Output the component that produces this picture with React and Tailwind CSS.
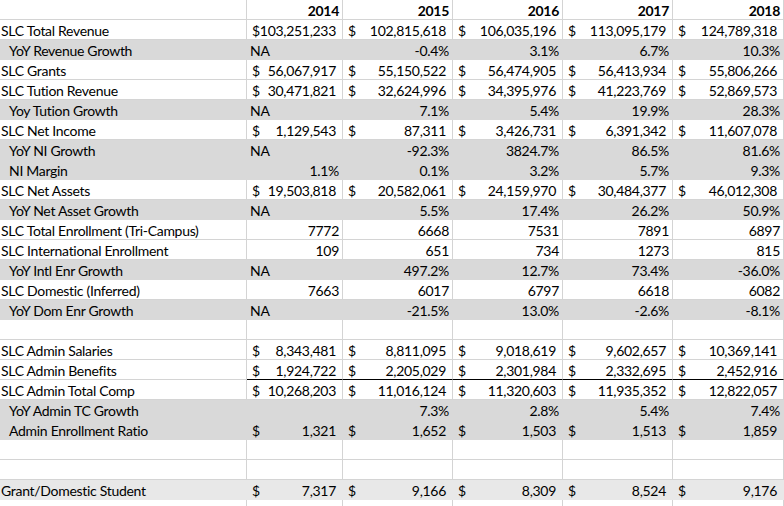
import React from 'react';

const years = ['2014', '2015', '2016', '2017', '2018'];

// kind: 'acct' = accounting ($ left, number right), 'num' = right aligned, 'pct' = percent / NA
const rows = [
  { label: 'SLC Total Revenue', kind: 'acct', values: ['$103,251,233', '102,815,618', '106,035,196', '113,095,179', '124,789,318'] },
  { label: 'YoY Revenue Growth', fill: 'dark', indent: true, kind: 'pct', values: ['NA', '-0.4%', '3.1%', '6.7%', '10.3%'] },
  { label: 'SLC Grants', kind: 'acct', values: ['56,067,917', '55,150,522', '56,474,905', '56,413,934', '55,806,266'] },
  { label: 'SLC Tution Revenue', kind: 'acct', values: ['30,471,821', '32,624,996', '34,395,976', '41,223,769', '52,869,573'] },
  { label: 'Yoy Tution Growth', fill: 'dark', indent: true, kind: 'pct', values: ['NA', '7.1%', '5.4%', '19.9%', '28.3%'] },
  { label: 'SLC Net Income', kind: 'acct', values: ['1,129,543', '87,311', '3,426,731', '6,391,342', '11,607,078'] },
  { label: 'YoY NI Growth', fill: 'dark', indent: true, kind: 'pct', values: ['NA', '-92.3%', '3824.7%', '86.5%', '81.6%'] },
  { label: 'NI Margin', fill: 'dark', indent: true, kind: 'pct', values: ['1.1%', '0.1%', '3.2%', '5.7%', '9.3%'] },
  { label: 'SLC Net Assets', kind: 'acct', values: ['19,503,818', '20,582,061', '24,159,970', '30,484,377', '46,012,308'] },
  { label: 'YoY Net Asset Growth', fill: 'dark', indent: true, kind: 'pct', values: ['NA', '5.5%', '17.4%', '26.2%', '50.9%'] },
  { label: 'SLC Total Enrollment (Tri-Campus)', kind: 'num', values: ['7772', '6668', '7531', '7891', '6897'] },
  { label: 'SLC International Enrollment', kind: 'num', values: ['109', '651', '734', '1273', '815'] },
  { label: 'YoY Intl Enr Growth', fill: 'dark', indent: true, kind: 'pct', values: ['NA', '497.2%', '12.7%', '73.4%', '-36.0%'] },
  { label: 'SLC Domestic (Inferred)', kind: 'num', values: ['7663', '6017', '6797', '6618', '6082'] },
  { label: 'YoY Dom Enr Growth', fill: 'dark', indent: true, kind: 'pct', values: ['NA', '-21.5%', '13.0%', '-2.6%', '-8.1%'] },
  { label: '', kind: 'num', values: ['', '', '', '', ''] },
  { label: 'SLC Admin Salaries', kind: 'acct', values: ['8,343,481', '8,811,095', '9,018,619', '9,602,657', '10,369,141'] },
  { label: 'SLC Admin Benefits', kind: 'acct', underline: true, values: ['1,924,722', '2,205,029', '2,301,984', '2,332,695', '2,452,916'] },
  { label: 'SLC Admin Total Comp', kind: 'acct', values: ['10,268,203', '11,016,124', '11,320,603', '11,935,352', '12,822,057'] },
  { label: 'YoY Admin TC Growth', fill: 'dark', indent: true, kind: 'pct', values: ['', '7.3%', '2.8%', '5.4%', '7.4%'] },
  { label: 'Admin Enrollment Ratio', fill: 'dark', indent: true, kind: 'acct', values: ['1,321', '1,652', '1,503', '1,513', '1,859'] },
  { label: '', kind: 'num', values: ['', '', '', '', ''] },
  { label: '', kind: 'num', values: ['', '', '', '', ''] },
  { label: 'Grant/Domestic Student', fill: 'light', kind: 'acct', values: ['7,317', '9,166', '8,309', '8,524', '9,176'] },
  { label: '', kind: 'num', values: ['', '', '', '', ''] },
];

const grid = 'grid grid-cols-[247px_96px_110px_110px_110px_111px]';

function rowColors(fill) {
  if (fill === 'dark') return 'bg-[#d9d9d9] border-[#d9d9d9]';
  if (fill === 'light') return 'bg-[#e8e8e8] border-[#e8e8e8]';
  return 'bg-white border-[#d4d4d4]';
}

function ValueCell({ kind, value, colors, underline }) {
  const border = underline ? 'border-b-black' : '';
  if (kind === 'acct' && value) {
    const joined = value.startsWith('$');
    return (
      <div className={`h-[20px] border-r border-b ${colors} ${border} flex items-end pb-[1px] justify-between pl-[5px] pr-[6px]`}>
        {joined ? <span className="ml-auto">{value}</span> : <><span>$</span><span>{value}</span></>}
      </div>
    );
  }
  const left = value === 'NA';
  return (
    <div className={`h-[20px] border-r border-b ${colors} ${border} flex items-end pb-[1px] ${left ? 'justify-start pl-[3px]' : 'justify-end pr-[3px]'}`}>
      {value}
    </div>
  );
}

export default function App() {
  return (
    <div className="w-[784px] h-[506px] overflow-hidden bg-white text-[14px] leading-none text-black font-['Lato','Open_Sans',sans-serif] tracking-[-0.3px]">
      <div className={grid}>
        <div className="h-[20px] border-r border-b border-[#d4d4d4]" />
        {years.map((y) => (
          <div key={y} className="h-[20px] border-r border-b border-[#d4d4d4] flex items-end pb-[1px] justify-end pr-[3px] font-bold">
            {y}
          </div>
        ))}
      </div>
      {rows.map((r, i) => {
        const colors = rowColors(r.fill);
        return (
          <div key={i} className={grid}>
            <div className={`h-[20px] border-r border-b ${colors} flex items-end pb-[1px] whitespace-nowrap ${r.indent ? 'pl-[9px]' : 'pl-[1px]'}`}>
              {r.label}
            </div>
            {r.values.map((v, j) => (
              <ValueCell key={j} kind={r.kind} value={v} colors={colors} underline={r.underline} />
            ))}
          </div>
        );
      })}
    </div>
  );
}
